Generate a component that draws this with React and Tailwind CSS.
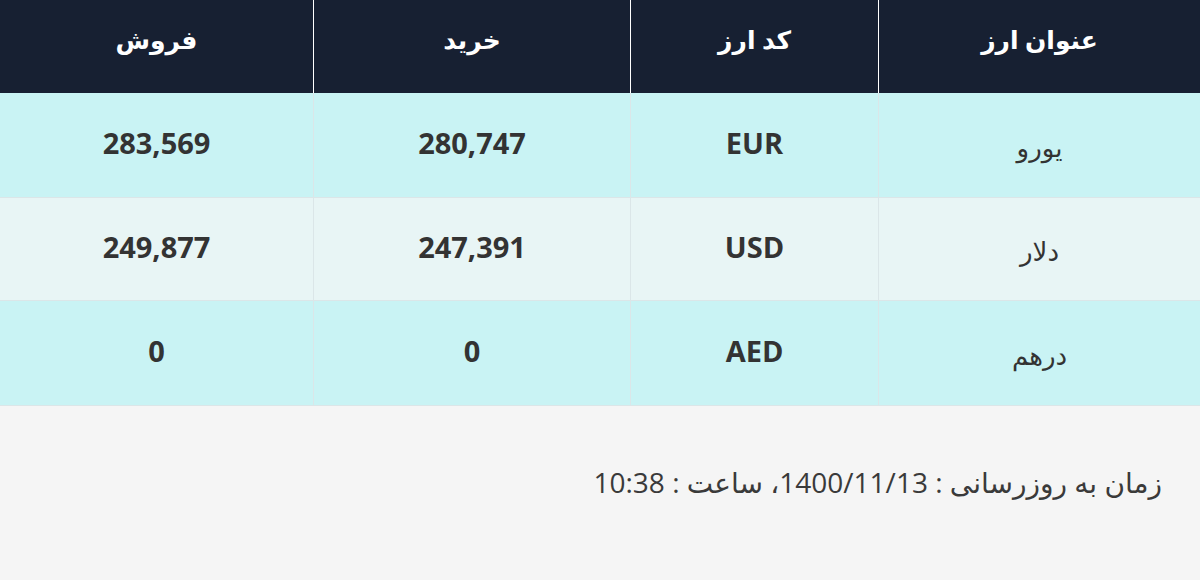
const rows = [
  { name: "یورو", code: "EUR", buy: "280,747", sell: "283,569", bg: "bg-[#c9f3f4]" },
  { name: "دلار", code: "USD", buy: "247,391", sell: "249,877", bg: "bg-[#e8f5f5]" },
  { name: "درهم", code: "AED", buy: "0", sell: "0", bg: "bg-[#c9f3f4]" },
];

const font = { fontFamily: '"Open Sans", "DejaVu Sans", sans-serif' };

function App() {
  return (
    <div dir="rtl" className="w-[1200px] h-[580px] bg-[#f5f5f5] text-[#333]" style={font}>
      {/* header */}
      <div className="grid grid-cols-[321px_248px_317px_314px] h-[93px] bg-[#172032] text-white font-bold text-[25px]">
        <div className="flex items-center justify-center pb-[14px]">عنوان ارز</div>
        <div className="flex items-center justify-center pb-[14px] border-r border-white">کد ارز</div>
        <div className="flex items-center justify-center pb-[14px] border-r border-white">خرید</div>
        <div className="flex items-center justify-center pb-[14px] border-r border-white">فروش</div>
      </div>

      {rows.map((r, i) => (
        <div
          key={r.code}
          className={`grid grid-cols-[321px_248px_317px_314px] ${i === 1 ? "h-[103px]" : "h-[105px]"} ${r.bg} border-b border-[#dbe6e8] text-[29px]`}
        >
          <div className="flex items-center justify-center pt-[4px] text-[26px]">{r.name}</div>
          <div className="flex items-center justify-center pb-[4px] border-r border-[#dbe6e8] font-bold">{r.code}</div>
          <div className="flex items-center justify-center pb-[4px] border-r border-[#dbe6e8] font-bold">{r.buy}</div>
          <div className="flex items-center justify-center pb-[4px] border-r border-[#dbe6e8] font-bold">{r.sell}</div>
        </div>
      ))}

      {/* footer */}
      <div className="pt-[55px] pr-[38px] text-[28px] text-[#3a3a3a]">
        زمان به روزرسانی : 1400/11/13، ساعت : 10:38
      </div>
    </div>
  );
}

export default App;
